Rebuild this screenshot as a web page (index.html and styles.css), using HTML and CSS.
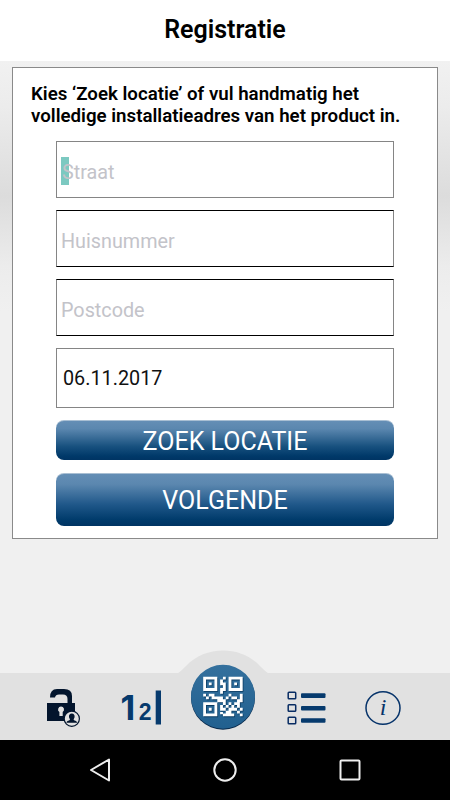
FILE: index.html
```html
<!DOCTYPE html>
<html lang="nl">
<head>
    <meta charset="UTF-8">
    <meta name="viewport" content="width=device-width, initial-scale=1.0">
    <title>Registratie</title>
    <link rel="stylesheet" href="styles.css">
</head>
<body>

    <header class="header">
        <h1>Registratie</h1>
    </header>

    <main class="content">
        <form class="panel">
            <p class="intro">Kies ‘Zoek locatie’ of vul handmatig het<br>volledige installatieadres van het product in.</p>
            <div class="field"><span class="cursor"></span><span class="label">Straat</span></div>
            <div class="field dark">Huisnummer</div>
            <div class="field dark">Postcode</div>
            <div class="field date">06.11.2017</div>
            <button type="button" class="btn btn-search">ZOEK LOCATIE</button>
            <button type="button" class="btn btn-next">VOLGENDE</button>
        </form>
    </main>

    <!-- Tab bar -->
    <nav class="tabbar">
        <svg class="tab-bump" width="120" height="25" viewBox="0 0 120 25">
            <path d="M12 25C16 23 19 20 23 16C33 5.500 46 .5 60 .5S87 5.500 97 16C101 20 104 23 108 25Z" fill="#e1e1e1"/>
        </svg>
        <a class="tab tab-lock">
            <svg width="34" height="40" viewBox="0 0 34 40">
                <path d="M0 15H20.500V11Q20.500 6.500 16 6.500H12Q8.500 6.500 8 9.500H3Q3 1 10 1H17Q25 1 25 8V15H28V33H0Z" fill="#03152d"/>
                <path d="M14 18.500a3 3 0 0 1 1.700 5.500V28H12.400V24A3 3 0 0 1 14 18.500Z" fill="#e1e1e1"/>
                <circle cx="24.800" cy="30.800" r="7.600" fill="#e1e1e1" stroke="#03152d" stroke-width="1.200"/>
                <path d="M24.800 25.500c2 0 3 1.300 2.800 3.300-.1 1.400-.8 2-1 2.700 0 1 3.500 1.200 3.500 3.300H19.500c0-2.100 3.500-2.300 3.500-3.300-.2-.7-.9-1.300-1-2.700-.2-2 .8-3.300 2.800-3.300Z" fill="#03152d"/>
            </svg>
        </a>
        <a class="tab tab-numbers">
            <svg width="46" height="50" viewBox="-4 -6 46 50">
                <text class="digit-one" x="-.5" y="31">1</text>
                <text class="digit-two" x="17.800" y="31">2</text>
                <rect x="34.700" y="1.500" width="5.300" height="34" fill="#063a6d"/>
            </svg>
        </a>
        <a class="tab tab-qr">
            <svg width="66" height="67" viewBox="0 0 66 67">
                <defs>
                    <linearGradient id="disc" x1="0" y1="0" x2="0" y2="1">
                        <stop offset="0" stop-color="#34709d"/>
                        <stop offset="1" stop-color="#21608f"/>
                    </linearGradient>
                    <path id="modules" fill-rule="evenodd" d="M0 0h5v5H0ZM1 1v3h3V1ZM2 2h1v1H2ZM9 0h5v5H9ZM10 1v3h3V1ZM11 2h1v1h-1ZM0 9h5v5H0ZM1 10v3h3v-3ZM2 11h1v1H2Z
                    M7 0h1v1H7ZM6 1h1v2H6ZM7 2h1v3H7ZM6 4h1v2H6Z
                    M0 6h1v1H0ZM2 6h2v1H2ZM1 7h1v1H1ZM3 7h4v1H3ZM5 8h3v1H5ZM9 6h1v1H9ZM13 6h1v2h-1ZM8 7h1v1H8ZM10 7h2v1h-2ZM12 8h2v1h-2Z
                    M7 9h1v1H7ZM9 9h1v1H9ZM11 9h2v1h-2ZM6 10h1v2H6ZM8 10h1v1H8ZM10 10h1v1h-1ZM12 10h1v1h-1ZM7 11h1v1H7ZM9 11h3v1H9ZM13 11h1v1h-1ZM6 12.500h1v.8H6ZM8 12h2v1H8ZM12 12h1v1h-1ZM7 13h4v1H7ZM13 13h1v1h-1Z"/>
                </defs>
                <circle cx="33" cy="33.700" r="32" fill="#07284a"/>
                <circle cx="33" cy="32.700" r="32" fill="url(#disc)"/>
                <use href="#modules" transform="translate(14 13.700) scale(2.820)" fill="#0b3b62"/>
                <use href="#modules" transform="translate(13.200 12.800) scale(2.820)" fill="#fff"/>
            </svg>
        </a>
        <a class="tab tab-list">
            <svg width="40" height="36" viewBox="0 0 40 36">
                <g fill="none" stroke="#082c63" stroke-width="1.500">
                    <rect x="1.200" y="2.200" width="7.500" height="6.500" rx=".8"/>
                    <rect x="1.200" y="14.700" width="7.500" height="6.500" rx=".8"/>
                    <rect x="1.200" y="27.200" width="7.500" height="6.500" rx=".8"/>
                </g>
                <g fill="#063a6d">
                    <rect x="14" y="3.300" width="24.500" height="4.600" rx="1"/>
                    <rect x="14" y="15.900" width="24.500" height="4.600" rx="1"/>
                    <rect x="14" y="28.200" width="24.500" height="4.600" rx="1"/>
                </g>
            </svg>
        </a>
        <a class="tab tab-info">
            <svg width="36" height="36" viewBox="0 0 36 36">
                <ellipse cx="18" cy="18" rx="17" ry="16.300" fill="none" stroke="#06336a" stroke-width="1.500"/>
                <text class="info-letter" x="18" y="25" text-anchor="middle">i</text>
            </svg>
        </a>
    </nav>

    <!-- Android navigation -->
    <footer class="navbar">
        <svg width="24" height="24" viewBox="0 0 24 24"><path d="M21 1.500V22.500L3 12Z"/></svg>
        <svg width="24" height="24" viewBox="0 0 24 24"><circle cx="12" cy="12" r="10.700"/></svg>
        <svg width="24" height="24" viewBox="0 0 24 24"><rect x="2.500" y="2.500" width="19" height="19" rx="1"/></svg>
    </footer>

</body>
</html>
```
FILE: styles.css
```css
* {
    box-sizing: border-box;
}

body {
    margin: 0;
    width: 450px;
    height: 800px;
    display: flex;
    flex-direction: column;
    overflow: hidden;
    font-family: Roboto, sans-serif;
    background-color: #f0f0f0;
    color: #000;
}

.header {
    height: 61px;
    background-color: #fff;
    text-align: center;
}

.header h1 {
    margin: 0;
    font-size: 25px;
    line-height: 59px;
    font-weight: 600;
}

.content {
    flex: 1;
    padding: 6px 12px 0;
    background: linear-gradient(#f1f1f1 0, #ececec 45px, #dcdcdc 135px, #ececec 205px, #f0f0f0 250px);
}

.panel {
    height: 472px;
    padding: 15px 43px 0;
    border: 1px solid #8a8a8a;
    background-color: #fff;
    display: flex;
    flex-direction: column;
}

.intro {
    margin: 0 -25px 14px;
    height: 44px;
    font-size: 18.7px;
    line-height: 22px;
    font-weight: 600;
    white-space: nowrap;
}

.field {
    height: 57px;
    flex-shrink: 0;
    margin-bottom: 12px;
    padding: 5px 0 0 4px;
    border: 1px solid #858585;
    display: flex;
    align-items: center;
    font-size: 19.8px;
    color: #c3c3c9;
}

.dark {
    border-top-color: #000;
    border-bottom-color: #000;
}

.cursor {
    width: 8px;
    height: 28px;
    margin: -2px -8px 0 0;
    background-color: #7cc9c1;
}

.label {
    position: relative; /* keeps the text above the cursor */
    margin-left: 1px;
}

.date {
    height: 60px;
    margin-bottom: 12px;
    padding: 1px 0 0 6px;
    color: #111;
}

.btn {
    flex-shrink: 0;
    padding: 0;
    border: 0;
    border-top: 1px solid #a9bfd3;
    border-radius: 8px;
    background: linear-gradient(#648eb5 0, #5b87af 20%, #18517f 65%, #003969 90%, #003463 100%);
    color: #fff;
    font-family: inherit;
    font-size: 25px;
}

.btn-search {
    height: 40px;
    margin-bottom: 13px;
    padding-top: 1px;
}

.btn-next {
    height: 53px;
    background: linear-gradient(#648eb5 0, #5b87af 20%, #20588a 58%, #003b6b 88%, #003463 100%);
}

.tabbar {
    position: relative;
    height: 67px;
    padding-left: 47px;
    display: flex;
    align-items: flex-start;
    background-color: #e1e1e1;
}

.tab-bump {
    position: absolute; /* overlaps the content above the bar */
    left: 163px;
    top: -23px;
}

.tab svg {
    display: block;
}

.tab-lock {
    margin-top: 15px;
}

.tab-numbers {
    margin: 10px 0 0 36px;
}

.tab-qr {
    position: relative;
    margin: -9px 0 0 27px;
}

.tab-list {
    margin: 17px 0 0 31px;
}

.tab-info {
    margin: 17px 0 0 38px;
}

.digit-one,
.digit-two {
    font-weight: bold;
    fill: #063a6d;
}

.digit-one {
    font-family: Inter, sans-serif;
    font-size: 34px;
}

.digit-two {
    font-family: "Liberation Sans", sans-serif;
    font-size: 23px;
}

.info-letter {
    font-family: "Liberation Serif", serif;
    font-style: italic;
    font-size: 24px;
    fill: #06336a;
}

.navbar {
    height: 60px;
    background-color: #000;
    display: flex;
    justify-content: center;
    align-items: center;
    gap: 101px;
}

.navbar svg {
    fill: none;
    stroke: #eee;
    stroke-width: 2;
    stroke-linejoin: round;
}
```
